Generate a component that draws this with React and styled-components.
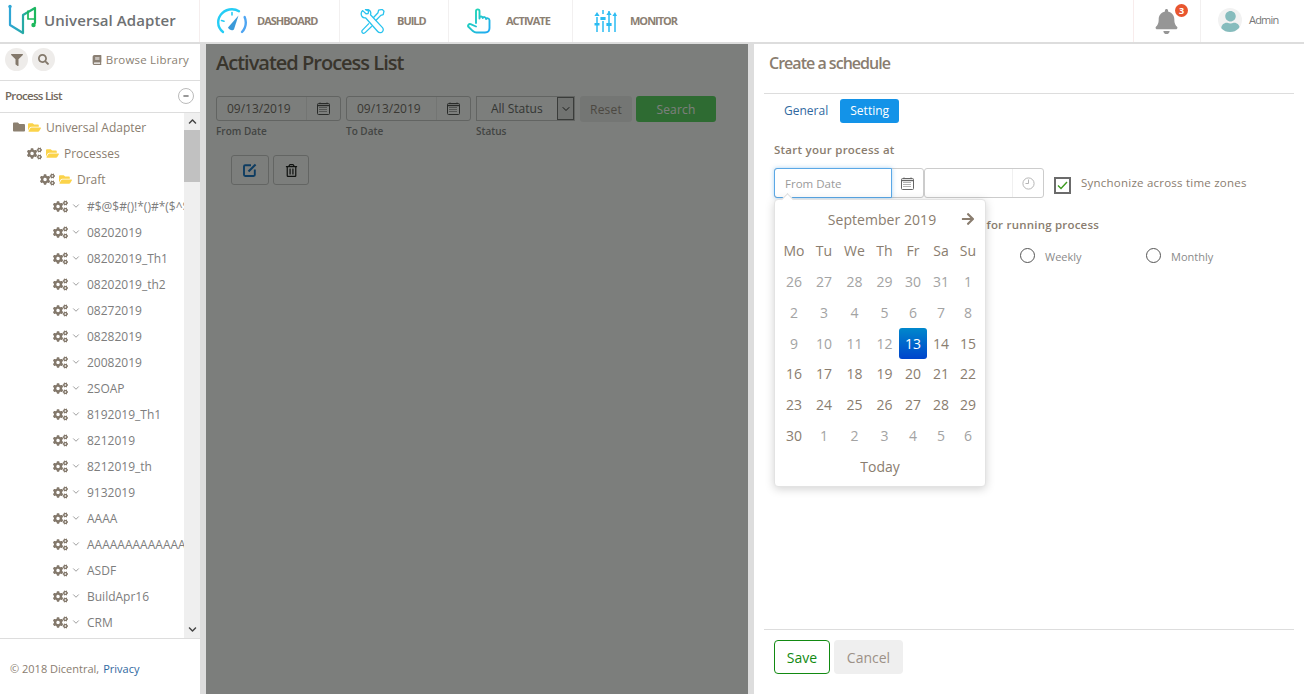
import React from "react";
import styled, { createGlobalStyle } from "styled-components";
import { FaBook, FaFilter, FaSearch, FaFolder, FaFolderOpen, FaCogs, FaBell, FaArrowRight, FaRegTrashAlt, FaChevronUp, FaChevronDown, FaMinus, FaUser } from "react-icons/fa";
import { FiChevronDown } from "react-icons/fi";

const Global = createGlobalStyle`
  html, body { margin: 0; padding: 0; height: 100%; overflow: hidden; background: #fff; }
  * { box-sizing: border-box; }
  body { font-family: "Open Sans", "Liberation Sans", sans-serif; color: #8a7d6f; }
`;
const Page = styled.div`width: 1304px; height: 694px; display: flex; flex-direction: column; overflow: hidden;`;
const Header = styled.header`height: 44px; flex: none; display: flex; border-bottom: 2px solid #ddd; background: #fff;`;
const Brand = styled.div`width: 200px; flex: none; display: flex; align-items: center; padding-left: 8px; gap: 6px; border-right: 1px solid #f5eeee;`;
const BrandName = styled.span`font-size: 15px; font-weight: 600; color: #6e7173; letter-spacing: .08px; white-space: nowrap; margin-top: -3px;`;
const NavItem = styled.div`
  flex: ${p => p.$w ? `0 0 ${p.$w}px` : "1"}; display: flex; align-items: center;
  border-right: 1px solid ${p => p.$w ? "#f2f0f0" : "#f8ecec"};
  padding-left: ${p => p.$pl}px; gap: ${p => p.$gap}px;
`;
const NavLabel = styled.span`font-size: 11px; font-weight: 700; color: #8c8073; letter-spacing: -1px; margin-top: -2px;`;
const BellBox = styled.div`width: 67px; flex: none; position: relative; display: flex; align-items: center; padding-left: 20px; border-right: 1px solid #f2f0f0; svg { color: #969696; }`;
const Badge = styled.span`position: absolute; left: 41px; top: 4px; width: 13px; height: 13px; border-radius: 50%; background: #e8562f; color: #fff; font-size: 9px; font-weight: 700; display: flex; align-items: center; justify-content: center;`;
const UserBox = styled.div`flex: none; width: 103px; display: flex; align-items: center; padding: 0 0 3px 17px; gap: 7px; font-size: 11px; color: #777; letter-spacing: -.8px;`;
const Avatar = styled.span`width: 24px; height: 24px; border-radius: 50%; background: #f2f2f2; overflow: hidden; display: flex; justify-content: center; align-items: flex-end; svg { color: #86bcbd; }`;

const Body = styled.div`flex: 1; display: flex; min-height: 0;`;
const Sidebar = styled.aside`width: 200px; flex: none; display: flex; flex-direction: column;`;
const SideTools = styled.div`height: 37px; flex: none; display: flex; align-items: center; padding: 0 11px 5px 5px; border-bottom: 1px solid #ddd; gap: 4px;`;
const RoundBtn = styled.span`width: 23px; height: 23px; border-radius: 50%; background: #eeecea; color: #83786b; display: flex; align-items: center; justify-content: center;`;
const Browse = styled.span`margin-left: auto; font-size: 11.5px; color: #8a7f73; display: flex; align-items: center; gap: 4px; letter-spacing: .2px; svg { color: #8a7f73; }`;
const ListHead = styled.div`height: 32px; flex: none; display: flex; align-items: center; justify-content: space-between; padding: 0 6px 2px 5px; border-bottom: 1px solid #ddd; font-size: 11.5px; font-weight: 600; color: #72685c; letter-spacing: -.7px;`;
const Collapse = styled.span`width: 16px; height: 16px; border-radius: 50%; border: 1px solid #bbb; display: flex; align-items: center; justify-content: center; color: #333;`;
const TreeWrap = styled.div`flex: 1; display: flex; min-height: 0; border-bottom: 1px solid #ddd;`;
const Tree = styled.div`flex: 1; min-width: 0; overflow: hidden; padding-top: 1px;`;
const Row = styled.div`height: 26px; display: flex; align-items: center; padding-left: ${p => p.$indent}px; margin-bottom: ${p => p.$after || 0}px; white-space: nowrap; font-size: 12px; color: ${p => p.$dark ? "#7d7d7d" : "#8a7d6f"}; svg { flex: none; }`;
const Cog = styled(FaCogs)`color: #83786b;`;
const Folder = styled(FaFolder)`color: #8c8070;`;
const Open = styled(FaFolderOpen)`color: #fbd34a; margin-left: ${p => p.$ml}px; margin-right: ${p => p.$mr}px;`;
const Caret = styled(FiChevronDown)`color: #8a8a8a; margin: 0 6px 0 3px;`;
const Scroll = styled.div`width: 16px; flex: none; background: #efefef; display: flex; flex-direction: column; align-items: center;`;
const ScrollArrow = styled.span`height: 17px; flex: none; display: flex; align-items: center; justify-content: center; color: #444;`;
const Thumb = styled.div`width: 100%; height: 52px; flex: none; background: #c1c1c1;`;
const ScrollGap = styled.div`flex: 1;`;
const Foot = styled.div`height: 55px; flex: none; display: flex; align-items: center; padding: 4px 0 0 10px; font-size: 11px; color: #8a7d6f; a { color: #30699f; margin-left: 4px; }`;

const Split = styled.div`width: 6px; flex: none; background: #ddd;`;
const Main = styled.main`width: 542px; flex: none; position: relative; background: #fff; padding: 0 10px; overflow: hidden;`;
const Overlay = styled.div`position: absolute; inset: 0; background: rgba(0,4,0,.515);`;
const Title = styled.h1`font-size: 20px; line-height: 27px; font-weight: 600; margin: 5px 0 20px; color: #75695c; letter-spacing: -1px;`;
const Filters = styled.div`display: flex; gap: 5px; align-items: flex-start;`;
const Field = styled.div`display: flex; flex-direction: column; width: ${p => p.$w}px;`;
const Inp = styled.div`height: 25px; border: 1px solid #c9c9c9; border-radius: 3px; display: flex; align-items: stretch; font-size: 12px; color: #77706a; background: #fff;`;
const InpText = styled.span`flex: 1; display: flex; align-items: center; padding-left: 10px;`;
const InpAdd = styled.span`width: 34px; flex: none; border-left: 1px solid #ededed; display: flex; align-items: center; justify-content: center; color: #555;`;
const FieldLabel = styled.label`font-size: 10px; font-weight: 600; color: #8a8a8a; margin-top: 4px; line-height: 13px;`;
const Sel = styled.div`height: 25px; border: 1px solid #c9c9c9; display: flex; align-items: center; font-size: 12px; color: #6c6c6c; padding-left: 14px; justify-content: space-between; background: #fff;`;
const SelBtn = styled.span`width: 17px; height: 23px; background: #e8e8e8; border: 1px solid #777; display: flex; align-items: center; justify-content: center; color: #333;`;
const Reset = styled.span`width: 52px; height: 26px; border-radius: 3px; background: #efefef; color: #9c9187; font-size: 12px; display: flex; align-items: center; justify-content: center; letter-spacing: .2px;`;
const SearchBtn = styled.span`width: 80px; height: 26px; margin-left: -1px; border-radius: 3px; background: #60d968; color: #fff; font-size: 12px; display: flex; align-items: center; justify-content: center; letter-spacing: .2px;`;
const Actions = styled.div`display: flex; gap: 4px; margin: 17px 0 0 15px;`;
const ActionBtn = styled.span`width: ${p => p.$w}px; height: 30px; border: 1px solid #ccc; border-radius: 3px; display: flex; align-items: center; justify-content: center; color: ${p => p.$c}; background: #fff;`;

const Panel = styled.section`flex: 1; min-width: 0; padding: 0 10px; display: flex; flex-direction: column; position: relative;`;
const PanelTitle = styled.h2`height: 50px; flex: none; margin: 0; padding: 0 0 12px 5px; display: flex; align-items: center; border-bottom: 1px solid #ddd; font-size: 16px; font-weight: 600; color: #8a7d6f; letter-spacing: -.98px;`;
const Tabs = styled.div`display: flex; align-items: center; gap: 2px; margin: 5px 0 0 10px; font-size: 12px;`;
const Tab = styled.span`height: 24px; padding: 0 10px 1px; border-radius: 3px; display: flex; align-items: center; width: ${p => p.$w}px; justify-content: center; color: ${p => p.$on ? "#fff" : "#30699f"}; background: ${p => p.$on ? "#1393e8" : "transparent"};`;
const Content = styled.div`flex: 1; padding: 19px 0 0 10px; min-height: 0;`;
const Section = styled.div`font-size: 11.5px; font-weight: 600; color: #8a7d6f; line-height: 16px; letter-spacing: ${p => p.$ls}px; white-space: nowrap;`;
const InRow = styled.div`display: flex; margin-top: 10px; align-items: flex-start; height: 30px;`;
const DateBox = styled.div`width: 150px; height: 30px; flex: none; display: flex; border: 1px solid #ccc; border-radius: 3px; position: relative;`;
const DateInput = styled.div`width: 118px; margin: -1px 0 -1px -1px; flex: none; border: 1px solid #5aa8e6; border-radius: 3px 0 0 3px; box-shadow: 0 0 4px rgba(90,168,230,.5); font-size: 11.5px; color: #9a9a9a; display: flex; align-items: center; padding-left: 10px;`;
const AddOn = styled.div`flex: 1; display: flex; align-items: center; justify-content: center; color: #666;`;
const TimeBox = styled.div`width: 120px; height: 30px; flex: none; display: flex; border: 1px solid #ccc; border-radius: 3px; justify-content: flex-end;`;
const TimeIcon = styled.div`width: 31px; border-left: 1px solid #f0f0f0; display: flex; align-items: center; justify-content: center; color: #b5b5b5;`;
const Check = styled.span`width: 17px; height: 17px; flex: none; margin: 9px 10px 0 10px; border: 2px solid #6b6b6b; display: flex; align-items: center; justify-content: center;`;
const CheckLabel = styled.span`font-size: 11.5px; color: #8a7d6f; margin-top: 7px; letter-spacing: .23px;`;
const Freq = styled.div`margin-top: 19px;`;
const Radios = styled.div`display: flex; margin-top: 15px; height: 16px; align-items: center;`;
const Radio = styled.div`width: ${p => p.$w}px; flex: none; display: flex; align-items: center; gap: 10px; font-size: 11px; color: #8a8a8a; padding-top: 1px;`;
const Ring = styled.span`width: 15px; height: 15px; margin-top: -3px; border: 1.5px solid ${p => p.$on ? "#4c9a4c" : "#555"}; border-radius: 50%; flex: none;`;
const HelpMark = styled.span`display: block; width: 8px; height: 6px; margin-top: 28px; background: #4f9bd0;`;
const Footer = styled.div`height: 65px; flex: none; border-top: 1px solid #ddd; padding: 10px 0 0 10px; display: flex; gap: 4px; align-items: flex-start;`;
const Save = styled.span`width: 56px; height: 34px; border: 1px solid #128a12; border-radius: 4px; color: #128a12; font-size: 14px; display: flex; align-items: center; justify-content: center;`;
const Cancel = styled.span`width: 69px; height: 34px; border-radius: 4px; background: #efefef; color: #9c9187; font-size: 14px; display: flex; align-items: center; justify-content: center;`;

const Pop = styled.div`position: absolute; left: 20px; top: 155px; width: 212px; height: 288px; background: #fff; border: 1px solid #e3e3e3; border-radius: 4px; box-shadow: 0 2px 10px rgba(0,0,0,.18); padding: 0 4px; z-index: 5;
  &:before { content: ""; position: absolute; left: 8px; top: -5px; width: 8px; height: 8px; background: #fff; border-left: 1px solid #ddd; border-top: 1px solid #ddd; transform: rotate(45deg); }
`;
const PopHead = styled.div`height: 36px; display: flex; align-items: center; font-size: 14px; color: #8a7d6f; position: relative; justify-content: center; padding: 2px 0 0 4px; letter-spacing: .05px;`;
const PopNext = styled.span`position: absolute; right: 6px; top: 12px; display: flex; color: #8a7d6f;`;
const Grid = styled.div`display: grid; grid-template-columns: 30px 30px 31px 29px 28px 28px 26px; grid-auto-rows: 30.8px; margin-top: -.6px;`;
const Cell = styled.span`display: flex; align-items: center; justify-content: center; font-size: 14px; border-radius: 3px;
  color: ${p => p.$sel ? "#fff" : p.$in ? "#8a7d6f" : "#a3a3a3"};
  background: ${p => p.$sel ? "linear-gradient(#0088cc,#0044cc)" : "transparent"};`;
const TodayBtn = styled.div`text-align: center; font-size: 14px; color: #8a7d6f; margin-top: 6px; line-height: 20px;`;

const Logo = () => (
  <svg width="30" height="34" viewBox="0 0 30 34" fill="none" strokeLinecap="round" strokeLinejoin="round">
    <defs><linearGradient id="lg" x1="0" y1="0" x2="1" y2="0"><stop offset="0" stopColor="#2fa6d6" /><stop offset=".5" stopColor="#27a9a8" /><stop offset="1" stopColor="#1cb85c" /></linearGradient></defs>
    <path d="M2 2.5V21L15 29V11L27 4V19" stroke="url(#lg)" strokeWidth="2.2" />
    <path d="M20 7V15H27" stroke="#1cb85c" strokeWidth="1.7" />
    <circle cx="2" cy="2.5" r="1.7" fill="#2fa6d6" />
    <circle cx="25.5" cy="21" r="2.2" fill="#1cb85c" />
  </svg>
);
const Grad = ({ id, a, b }) => (
  <defs><linearGradient id={id} x1="0" y1="0" x2="1" y2="1"><stop offset="0" stopColor={a} /><stop offset="1" stopColor={b} /></linearGradient></defs>
);
const Gauge = () => (
  <svg width="31" height="26" viewBox="0 0 31 26" fill="none" strokeLinecap="round">
    <path d="M6 24C2.6 21.4 1.2 17.6 1.2 14.5C1.2 7.2 7.4 1.3 15 1.3C17.6 1.3 20 2 22 3.2" stroke="#25cdf5" strokeWidth="2.4" />
    <path d="M27.6 9C28.4 10.8 28.8 12.6 28.8 14.5C28.8 18 27.4 21.5 25 24" stroke="#4ea5f2" strokeWidth="2.4" />
    <path d="M11 19.5L21.5 7.5L17 21.2C16 23 12.4 22.6 11 19.5Z" fill="#3a9ad9" />
    <path d="M4.5 12.5L7 13.2M15 4.5V7" stroke="#25cdf5" strokeWidth="1.6" />
  </svg>
);
const Tools = () => (
  <svg width="25" height="25" viewBox="0 0 25 25" fill="none" stroke="#28c3ee" strokeWidth="1.3" strokeLinejoin="round">
    <path d="M2 7.5C.8 5.4 1.2 3 2.7 1.6L6 4.8L8.2 4.5L8.6 2.2L5.5.6C7.8-.2 10 .9 10.6 3C10.9 4 10.8 5 10.5 5.7L22.5 18.6C24 20.5 23 22.7 21.6 23.4C20 24 18.6 23.6 17.7 22.5L5.5 8.8C4.4 9 3 8.8 2 7.5Z" />
    <path d="M13.3 8.8L18 3.7L18.6 1.2L22.2.4L24 2.2L23.2 5.6L20.8 6.4L15.8 11.5" />
    <path d="M9 14.4L2.2 21.4C1.4 22.6 2.2 24 3.4 24.3C4.2 24.4 4.9 24 5.4 23.4L11.8 17.2" />
  </svg>
);
const Hand = () => (
  <svg width="26" height="26" viewBox="0 0 26 26" fill="none" strokeWidth="1.9" strokeLinecap="round" strokeLinejoin="round">
    <Grad id="g2" a="#22e0a8" b="#20a8f5" />
    <path d="M9 15V3.2C9 .8 12.5.8 12.5 3.2V10.5M12.5 9.5C13 8 15.5 8 15.8 10M15.8 10C16.4 8.6 18.6 8.8 19 10.5M19 11C19.6 9.8 22.4 10 22.5 12.2V20C22.5 22.8 20.6 24.5 18 24.5H9.5C7.6 24.5 6.6 23.6 5.4 22.6L1.4 18.8C.4 17.6 1.8 15.6 3.6 16.2L9 18.5" stroke="url(#g2)" />
  </svg>
);
const Sliders = () => (
  <svg width="23" height="24" viewBox="0 0 23 24" fill="none" stroke="#2bbcf2" strokeWidth="1.5">
    <path d="M3 8V23M9 1V5M9 12V23M15 2V23M21 7V23" />
    <path d="M.4 7L3 3L5.6 7ZM6.4 8H11.6V11H6.4ZM12.4 14H17.6V17H12.4ZM18.4 7L21 3L23 7Z" fill="#2bbcf2" stroke="none" />
    <path d="M12.4 6L15 2L17.6 6Z" fill="#2bbcf2" stroke="none" />
    <path d="M.5 14H5.5V16.5H.5Z" fill="#2bbcf2" stroke="none" />
  </svg>
);
const CalIcon = () => (
  <svg width="13" height="13" viewBox="0 0 13 13" fill="none" stroke="currentColor">
    <rect x=".5" y="1.5" width="12" height="11" rx="1" />
    <path d="M.5 3.5H12.5" strokeWidth="1.4" />
    <path d="M3 .5V2M10 .5V2" />
    <path d="M2.5 5.5h8M2.5 7.5h8M2.5 9.5h8" strokeDasharray="1 1" />
  </svg>
);
const ClockIcon = () => (
  <svg width="13" height="13" viewBox="0 0 13 13" fill="none" stroke="currentColor">
    <circle cx="6.5" cy="6.5" r="5.6" />
    <path d="M6.5 2.5V6.5H3.5" />
  </svg>
);
const EditIcon = () => (
  <svg width="14" height="14" viewBox="0 0 14 14" fill="none" stroke="currentColor" strokeWidth="1.9">
    <path d="M8 2.2H2.2A1.2 1.2 0 0 0 1 3.4V11.8A1.2 1.2 0 0 0 2.2 13H10.6A1.2 1.2 0 0 0 11.8 11.8V6.5" />
    <path d="M5.5 8.6L12.6 1.4" strokeWidth="2.1" />
  </svg>
);

const rows = ["#$@$#()!*()#*($^$#$", "08202019", "08202019_Th1", "08202019_th2", "08272019", "08282019", "20082019", "2SOAP", "8192019_Th1", "8212019", "8212019_th", "9132019", "AAAA", "AAAAAAAAAAAAAAA", "ASDF", "BuildApr16", "CRM"];
const prev = [26, 27, 28, 29, 30, 31];
const days = Array.from({ length: 30 }, (_, i) => i + 1);
const tail = [1, 2, 3, 4, 5, 6];
const heads = ["Mo", "Tu", "We", "Th", "Fr", "Sa", "Su"];

export default function App() {
  return (
    <Page>
      <Global />
      <Header>
        <Brand><Logo /><BrandName>Universal Adapter</BrandName></Brand>
        <NavItem $w={140} $pl={17} $gap={9}><Gauge /><NavLabel>DASHBOARD</NavLabel></NavItem>
        <NavItem $w={109} $pl={20} $gap={12}><Tools /><NavLabel>BUILD</NavLabel></NavItem>
        <NavItem $w={124} $pl={18} $gap={13}><Hand /><NavLabel>ACTIVATE</NavLabel></NavItem>
        <NavItem $pl={21} $gap={13}><Sliders /><NavLabel>MONITOR</NavLabel></NavItem>
        <BellBox><FaBell size={25} /><Badge>3</Badge></BellBox>
        <UserBox><Avatar><FaUser size={21} /></Avatar>Admin</UserBox>
      </Header>
      <Body>
        <Sidebar>
          <SideTools>
            <RoundBtn><FaFilter size={12} /></RoundBtn>
            <RoundBtn><FaSearch size={11} /></RoundBtn>
            <Browse><FaBook size={10} />Browse Library</Browse>
          </SideTools>
          <ListHead>Process List<Collapse><FaMinus size={6} /></Collapse></ListHead>
          <TreeWrap>
            <Tree>
              <Row $indent={13}><Folder size={12} /><Open size={13} $ml={3} $mr={5} />Universal Adapter</Row>
              <Row $indent={27}><Cog size={15} /><Open size={13} $ml={4} $mr={5} />Processes</Row>
              <Row $indent={40} $after={1}><Cog size={15} /><Open size={13} $ml={4} $mr={5} />Draft</Row>
              {rows.map(r => (
                <Row key={r} $indent={53} $dark><Cog size={15} /><Caret size={10} />{r}</Row>
              ))}
            </Tree>
            <Scroll>
              <ScrollArrow><FaChevronUp size={9} /></ScrollArrow>
              <Thumb />
              <ScrollGap />
              <ScrollArrow><FaChevronDown size={9} /></ScrollArrow>
            </Scroll>
          </TreeWrap>
          <Foot>© 2018 Dicentral,<a>Privacy</a></Foot>
        </Sidebar>
        <Split />
        <Main>
          <Title>Activated Process List</Title>
          <Filters>
            <Field $w={125}><Inp><InpText>09/13/2019</InpText><InpAdd><CalIcon /></InpAdd></Inp><FieldLabel>From Date</FieldLabel></Field>
            <Field $w={125}><Inp><InpText>09/13/2019</InpText><InpAdd><CalIcon /></InpAdd></Inp><FieldLabel>To Date</FieldLabel></Field>
            <Field $w={99}><Sel>All Status<SelBtn><FiChevronDown size={12} /></SelBtn></Sel><FieldLabel>Status</FieldLabel></Field>
            <Reset>Reset</Reset>
            <SearchBtn>Search</SearchBtn>
          </Filters>
          <Actions>
            <ActionBtn $w={38} $c="#1e78c8"><EditIcon /></ActionBtn>
            <ActionBtn $w={36} $c="#222"><FaRegTrashAlt size={13} /></ActionBtn>
          </Actions>
          <Overlay />
        </Main>
        <Split />
        <Panel>
          <PanelTitle>Create a schedule</PanelTitle>
          <Tabs><Tab>General</Tab><Tab $on $w={59}>Setting</Tab></Tabs>
          <Content>
            <Section $ls={.25}>Start your process at</Section>
            <InRow>
              <DateBox>
                <DateInput>From Date</DateInput>
                <AddOn><CalIcon /></AddOn>
              </DateBox>
              <TimeBox><TimeIcon><ClockIcon /></TimeIcon></TimeBox>
              <Check><svg width="13" height="11" viewBox="0 0 13 11" fill="none"><path d="M2 5.5L5 8.5L11 2" stroke="#3c9a1e" strokeWidth="1.4" /></svg></Check>
              <CheckLabel>Synchonize across time zones</CheckLabel>
            </InRow>
            <Freq>
              <Section $ls={.21}>Choose the schedule time frequency for running process</Section>
              <Radios>
                <Radio $w={123}><Ring $on />Once</Radio>
                <Radio $w={123}><Ring />Daily</Radio>
                <Radio $w={126}><Ring />Weekly</Radio>
                <Radio $w={100}><Ring />Monthly</Radio>
              </Radios>
              <HelpMark />
            </Freq>
            <Pop>
              <PopHead>September 2019<PopNext><FaArrowRight size={14} /></PopNext></PopHead>
              <Grid>
                {heads.map(h => <Cell key={h} $in>{h}</Cell>)}
                {prev.map(n => <Cell key={"p" + n}>{n}</Cell>)}
                {days.map(n => <Cell key={n} $sel={n === 13} $in={n > 13}>{n}</Cell>)}
                {tail.map(n => <Cell key={"t" + n}>{n}</Cell>)}
              </Grid>
              <TodayBtn>Today</TodayBtn>
            </Pop>
          </Content>
          <Footer><Save>Save</Save><Cancel>Cancel</Cancel></Footer>
        </Panel>
      </Body>
    </Page>
  );
}
